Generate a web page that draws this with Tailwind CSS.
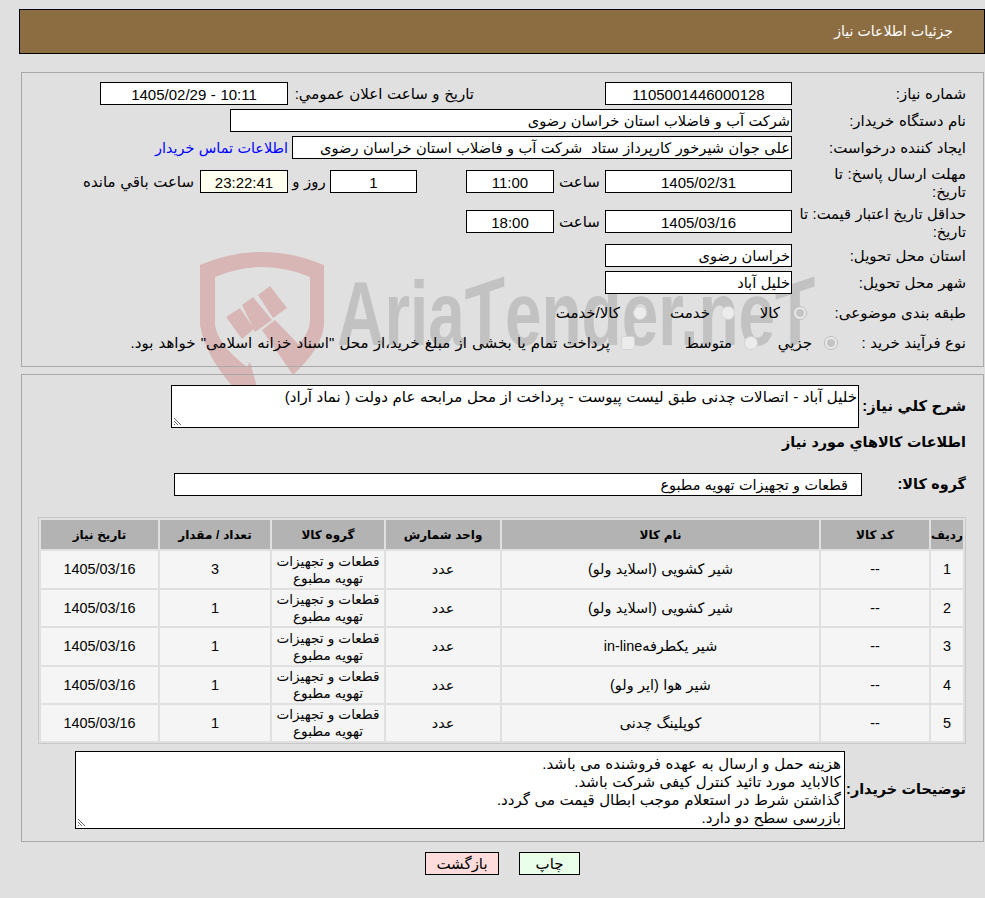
<!DOCTYPE html>
<html lang="fa" dir="rtl">
<head>
  <meta charset="UTF-8">
  <title>جزئیات اطلاعات نیاز</title>
  <script src="https://cdn.jsdelivr.net/npm/@tailwindcss/browser@4"></script>
</head>
<body class="bg-[#e0e0e0] font-['Liberation_Sans','DejaVu_Sans',sans-serif] text-[15px] [word-spacing:0.4px] text-black w-[985px] h-[898px] overflow-hidden relative">
  <!-- Watermark -->
  <svg width="160" height="150" viewBox="0 0 160 150" class="absolute left-[190px] top-[240px]">
    <path fill="#d8b6b6" fill-rule="evenodd" d="M10 25 Q72 -1 134 25 L134 85 Q132 108 103 135 L100 113 Q120 95 120 80 L120 37 Q72 17 25 37 L25 85 Q28 105 57 127 L60 122 L67 147 L43 147 Q15 115 10 85 Z"/>
    <path fill="#d8b6b6" d="M36 77 L50 68 L64 89 L52 99 Z M52 65 L63 57 L82 80 L65 92 Z M68 55 L80 46 L97 68 L83 78 Z M72 90 L85 80 L112 108 L103 135 Z"/>
  </svg>
  <div dir="ltr" class="absolute left-[337px] top-[269px] font-bold text-[90px] text-[#c2c2c2] leading-none whitespace-nowrap scale-x-[0.73] origin-left">Aria<span class="inline-block -skew-y-[14deg]">T</span>ender.ne<span class="inline-block -skew-y-[14deg]">T</span></div>

  <!-- Header -->
  <div class="relative pt-[9px]">
    <div class="h-[45px] ml-[19px] bg-[#8c6d42] border border-black flex items-center pr-[31px] text-white text-[14px]">جزئیات اطلاعات نیاز</div>
  </div>

  <!-- Need info panel -->
  <div class="relative mt-[18px] ml-[21px] mr-[1px] h-[295px] border border-[#a9a9a9] pr-[17px] pt-[9px]">
    <div class="flex items-center h-[23px]">
      <div class="w-[174px] pt-[2px]">شماره نیاز:</div>
      <div class="w-[187px] h-[23px] bg-white border border-black text-center leading-[23px]">1105001446000128</div>
      <div class="w-[131px] shrink-0"></div>
      <div class="w-[186px] pt-[2px]">تاریخ و ساعت اعلان عمومي:</div>
      <div class="w-[188px] h-[23px] bg-white border border-black text-center leading-[23px]" dir="ltr">1405/02/29 - 10:11</div>
    </div>
    <div class="flex items-center h-[23px] mt-[4px]">
      <div class="w-[174px] pt-[2px]">نام دستگاه خریدار:</div>
      <div class="w-[562px] h-[23px] bg-white border border-black pr-[1px] leading-[23px] text-[14.6px]">شرکت آب و فاضلاب استان خراسان رضوی</div>
    </div>
    <div class="flex items-center h-[23px] mt-[4px]">
      <div class="w-[174px] pt-[2px]">ایجاد کننده درخواست:</div>
      <div class="w-[500px] h-[23px] bg-white border border-black pr-[1px] leading-[23px] text-[14.6px] whitespace-pre">علی جوان شیرخور کارپرداز ستاد  شرکت آب و فاضلاب استان خراسان رضوی</div>
      <a class="text-[#0000ff] pr-[4px] pt-[2px] text-[14.4px]">اطلاعات تماس خریدار</a>
    </div>
    <div class="flex items-center h-[43px] mt-[1px]">
      <div class="w-[174px] leading-[18px] pt-[2px]">مهلت ارسال پاسخ: تا<br>تاریخ:</div>
      <div class="w-[187px] h-[23px] bg-white border border-black text-center leading-[23px]">1405/02/31</div>
      <div class="w-[51px] text-center pt-[2px]">ساعت</div>
      <div class="w-[88px] h-[23px] bg-white border border-black text-center leading-[23px]">11:00</div>
      <div class="w-[49px]"></div>
      <div class="w-[87px] h-[23px] bg-white border border-black text-center leading-[23px]">1</div>
      <div class="w-[42px] text-center pt-[2px]">روز و</div>
      <div class="w-[88px] h-[23px] bg-[#fffff0] border border-black text-center leading-[23px]">23:22:41</div>
      <div class="pr-[6px] pt-[2px]">ساعت باقي مانده</div>
    </div>
    <div class="flex items-center h-[37px]">
      <div class="w-[174px] leading-[18px] pt-[2px] text-[14.7px]">حداقل تاریخ اعتبار قیمت: تا<br>تاریخ:</div>
      <div class="w-[187px] h-[23px] bg-white border border-black text-center leading-[23px]">1405/03/16</div>
      <div class="w-[51px] text-center pt-[2px]">ساعت</div>
      <div class="w-[88px] h-[23px] bg-white border border-black text-center leading-[23px]">18:00</div>
    </div>
    <div class="flex items-center h-[23px] mt-[4px]">
      <div class="w-[174px] pt-[2px]">استان محل تحویل:</div>
      <div class="w-[187px] h-[23px] bg-white border border-black pr-[1px] leading-[23px] text-[14.6px]">خراسان رضوی</div>
    </div>
    <div class="flex items-center h-[23px] mt-[4px]">
      <div class="w-[174px] pt-[2px]">شهر محل تحویل:</div>
      <div class="w-[187px] h-[23px] bg-white border border-black pr-[1px] leading-[23px] text-[14.6px]">خلیل آباد</div>
    </div>
    <div class="flex items-center h-[30px] mt-[4px]">
      <div class="w-[159px]">طبقه بندی موضوعی:</div>
      <span class="w-[14px] h-[14px] rounded-full border border-[#bdbdbd] bg-[#eaeaea] flex items-center justify-center"><span class="w-[8px] h-[8px] rounded-full bg-[#c4c4c4]"></span></span>
      <div class="w-[58px] pr-[13px] whitespace-nowrap">کالا</div>
      <span class="w-[14px] h-[14px] rounded-full border border-[#d4d4d4] bg-[#ececec]"></span>
      <div class="w-[74px] pr-[11px] whitespace-nowrap">خدمت</div>
      <span class="w-[14px] h-[14px] rounded-full border border-[#d4d4d4] bg-[#ececec]"></span>
      <div class="pr-[13px] whitespace-nowrap">کالا/خدمت</div>
    </div>
    <div class="flex items-center h-[30px]">
      <div class="w-[128px]">نوع فرآیند خرید :</div>
      <span class="w-[14px] h-[14px] rounded-full border border-[#bdbdbd] bg-[#eaeaea] flex items-center justify-center"><span class="w-[8px] h-[8px] rounded-full bg-[#c4c4c4]"></span></span>
      <div class="w-[66px] pr-[12px] whitespace-nowrap">جزيي</div>
      <span class="w-[14px] h-[14px] rounded-full border border-[#d4d4d4] bg-[#ececec]"></span>
      <div class="w-[109px] pr-[12px] whitespace-nowrap">متوسط</div>
      <span class="w-[14px] h-[14px] rounded-[3px] border border-[#d4d4d4] bg-[#ececec]"></span>
      <div class="pr-[11px] whitespace-nowrap [word-spacing:1px]">پرداخت تمام یا بخشی از مبلغ خرید،از محل "اسناد خزانه اسلامی" خواهد بود.</div>
    </div>
  </div>

  <!-- Description and items panel -->
  <div class="relative mt-[7px] ml-[21px] mr-[1px] h-[468px] border border-[#a9a9a9] pr-[17px] pt-[10px]">
    <div class="flex items-center h-[43px]">
      <div class="w-[107px] font-bold text-[14.8px] whitespace-nowrap">شرح کلي نیاز:</div>
      <div class="relative w-[688px] h-[43px] bg-white border border-black pr-[1px] leading-[22px]">خلیل آباد - اتصالات چدنی طبق لیست پیوست - پرداخت از محل مرابحه عام دولت ( نماد آراد)
        <svg width="10" height="10" viewBox="0 0 10 10" class="absolute left-[1px] bottom-[1px]"><path d="M1 2 L8 9 M1 5 L5 9 M1 8 L2 9" stroke="#666" fill="none"/></svg>
      </div>
    </div>
    <div class="h-[30px] font-bold text-[14.4px] flex items-center">اطلاعات کالاهاي مورد نیاز</div>
    <div class="flex items-center h-[23px] mt-[15px]">
      <div class="w-[104px] font-bold text-[14.4px]">گروه کالا:</div>
      <div class="w-[688px] h-[23px] bg-white border border-black pr-[13px] leading-[23px] text-[14.4px]">قطعات و تجهیزات تهویه مطبوع</div>
    </div>
    <table class="mt-[21px] w-[928px] border-separate border-spacing-[2px] border border-[#c8c8c8] text-center table-fixed text-[14.4px]">
      <thead>
        <tr class="h-[29px] bg-[#b3b3b3] font-bold text-[12px]">
          <th class="w-[32px]">ردیف</th>
          <th class="w-[108px]">کد کالا</th>
          <th>نام کالا</th>
          <th class="w-[114px]">واحد شمارش</th>
          <th class="w-[112px]">گروه کالا</th>
          <th class="w-[110px]">تعداد / مقدار</th>
          <th class="w-[117px]">تاریخ نیاز</th>
        </tr>
      </thead>
      <tbody class="bg-[#f5f5f5] leading-[17px]">
        <tr class="h-[37px]"><td>1</td><td>--</td><td>شیر کشویی (اسلاید ولو)</td><td>عدد</td><td class="text-[13.6px]">قطعات و تجهیزات<br>تهویه مطبوع</td><td>3</td><td>1405/03/16</td></tr>
        <tr class="h-[36px]"><td>2</td><td>--</td><td>شیر کشویی (اسلاید ولو)</td><td>عدد</td><td class="text-[13.6px]">قطعات و تجهیزات<br>تهویه مطبوع</td><td>1</td><td>1405/03/16</td></tr>
        <tr class="h-[37px]"><td>3</td><td>--</td><td>شیر یکطرفهin-line</td><td>عدد</td><td class="text-[13.6px]">قطعات و تجهیزات<br>تهویه مطبوع</td><td>1</td><td>1405/03/16</td></tr>
        <tr class="h-[36px]"><td>4</td><td>--</td><td>شیر هوا (ایر ولو)</td><td>عدد</td><td class="text-[13.6px]">قطعات و تجهیزات<br>تهویه مطبوع</td><td>1</td><td>1405/03/16</td></tr>
        <tr class="h-[36px]"><td>5</td><td>--</td><td>کوپلینگ چدنی</td><td>عدد</td><td class="text-[13.6px]">قطعات و تجهیزات<br>تهویه مطبوع</td><td>1</td><td>1405/03/16</td></tr>
      </tbody>
    </table>
    <div class="flex items-center mt-[7px]">
      <div class="w-[121px] font-bold text-[14.4px] whitespace-nowrap">توضیحات خریدار:</div>
      <div class="relative w-[770px] h-[78px] bg-white border border-black pr-[3px] pt-[3px] leading-[18px]">
        <div>هزینه حمل و ارسال به عهده فروشنده می باشد.</div>
        <div>کالاباید مورد تائید کنترل کیفی شرکت باشد.</div>
        <div>گذاشتن شرط در استعلام موجب ابطال قیمت می گردد.</div>
        <div>بازرسی سطح دو دارد.</div>
        <svg width="10" height="10" viewBox="0 0 10 10" class="absolute left-[1px] bottom-[1px]"><path d="M1 2 L8 9 M1 5 L5 9 M1 8 L2 9" stroke="#666" fill="none"/></svg>
      </div>
    </div>
  </div>

  <!-- Buttons -->
  <div class="relative flex justify-center gap-[20px] mt-[10px] pl-[20px]">
    <button class="w-[61px] h-[23px] bg-[#eaffea] border border-black leading-[21px]">چاپ</button>
    <button class="w-[74px] h-[23px] bg-[#ffdcdc] border border-black leading-[21px]">بازگشت</button>
  </div>
</body>
</html>
